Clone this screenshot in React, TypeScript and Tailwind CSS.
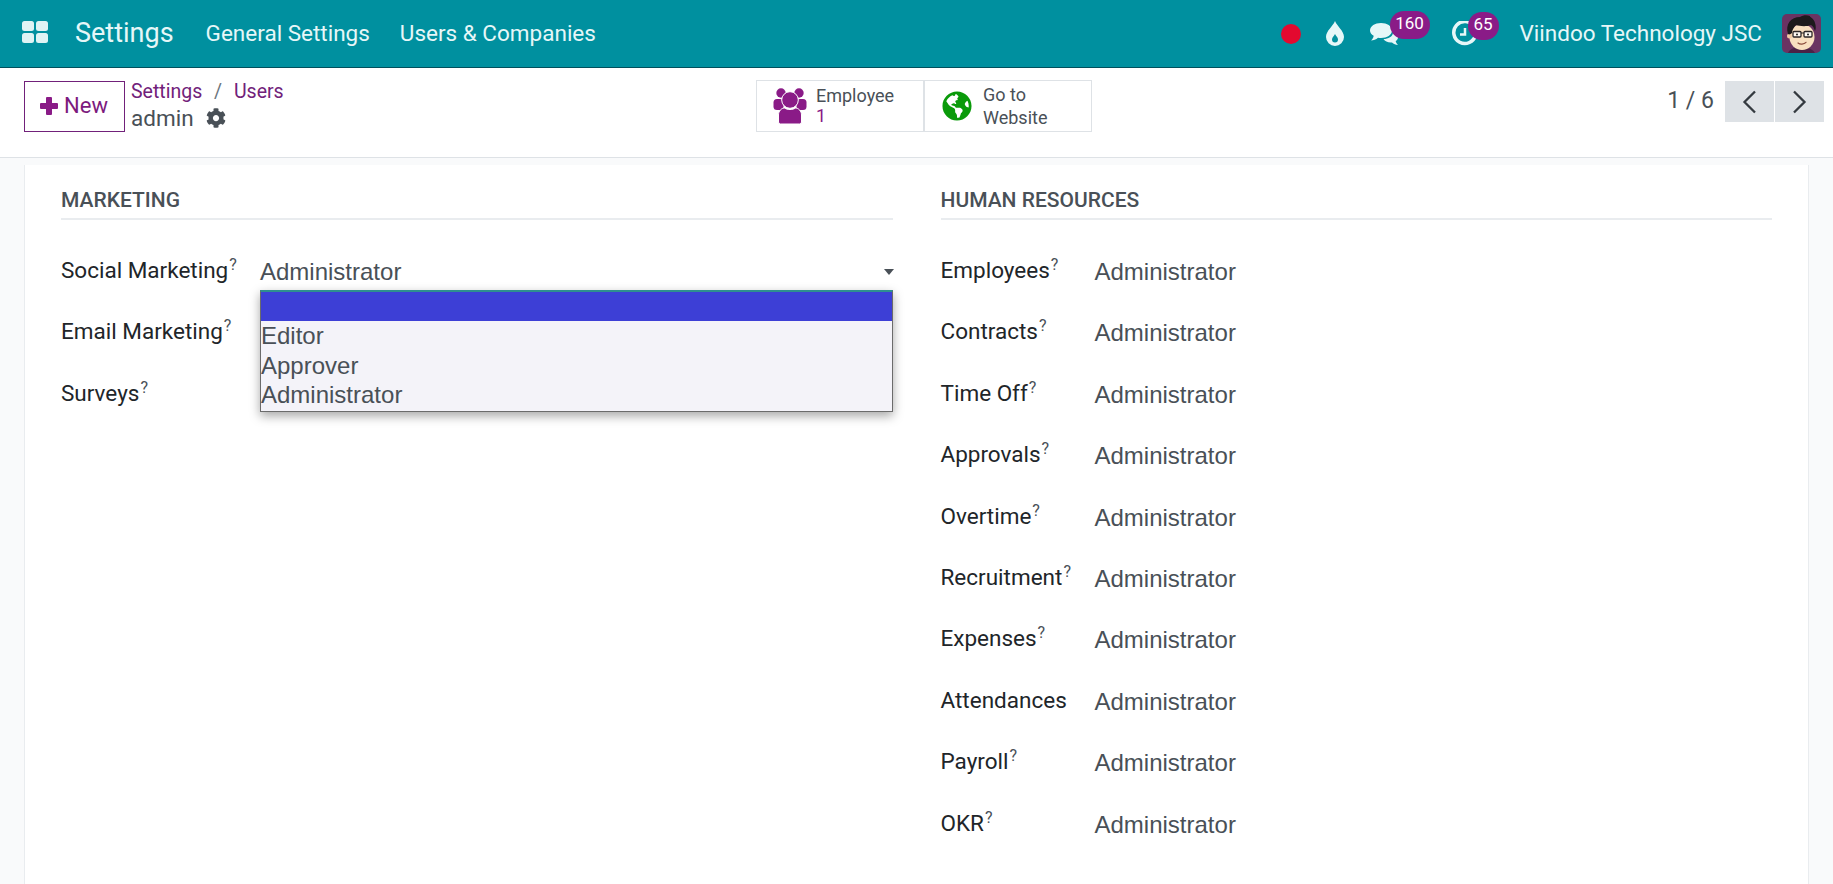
import React from "react";
import { FaCog, FaGlobeAmericas } from "react-icons/fa";

const leftRows = ["Social Marketing", "Email Marketing", "Surveys"];
const rightRows: [string, boolean][] = [
  ["Employees", true],
  ["Contracts", true],
  ["Time Off", true],
  ["Approvals", true],
  ["Overtime", true],
  ["Recruitment", true],
  ["Expenses", true],
  ["Attendances", false],
  ["Payroll", true],
  ["OKR", true],
];

function Label({ text, help = true }: { text: string; help?: boolean }) {
  return (
    <div className="text-[22.5px] leading-[30px] text-[#212529]">
      {text}
      {help && <sup className="text-[16px] text-[#495057] ml-px">?</sup>}
    </div>
  );
}

function Value({ className = "" }: { className?: string }) {
  return (
    <div className={`text-[24px] leading-[30px] text-[#495057] font-['Liberation_Sans',sans-serif] ${className}`}>
      Administrator
    </div>
  );
}

function Avatar() {
  return (
    <svg width="39" height="39" viewBox="0 0 39 39" className="rounded-[5px]">
      <rect width="39" height="39" fill="#6a3362" />
      <path d="M6 39c2-5 8-6 13-6s11 1 14 6z" fill="#4a2346" />
      <ellipse cx="20" cy="23" rx="12.500" ry="13" fill="#f8dfc0" />
      <circle cx="7.500" cy="22" r="2.500" fill="#f0c9a3" />
      <path d="M6 20C3 10 9 3 18 3c3-2 7-2 10-1-1 1 4 2 5 7 1 3 1 6 0 8-1-3-2-5-4-6-5 2-12 1-15 0-2 2-4 5-4 8-1 1-3 2-4 1z" fill="#1d1a1c" />
      <rect x="11" y="17.500" width="8" height="5.500" rx="1" fill="#fffc" stroke="#2a2526" strokeWidth="1.300" />
      <rect x="22" y="17.500" width="8" height="5.500" rx="1" fill="#fffc" stroke="#2a2526" strokeWidth="1.300" />
      <path d="M19 19h3" stroke="#2a2526" strokeWidth="1.200" />
      <circle cx="15" cy="20.500" r="1" fill="#222" />
      <circle cx="26" cy="20.500" r="1" fill="#222" />
      <path d="M16 29c2 1.500 6 1.500 8-.7" fill="none" stroke="#8a4b3c" strokeWidth="1.200" strokeLinecap="round" />
    </svg>
  );
}

function People() {
  return (
    <svg width="36" height="36" viewBox="0 0 33 36" fill="#8a1b87" className="shrink-0">
      <circle cx="7.500" cy="5" r="4.700" />
      <circle cx="25.500" cy="5" r="4.700" />
      <rect x="0" y="11" width="10" height="11" rx="3.500" />
      <rect x="23" y="11" width="10" height="11" rx="3.500" />
      <circle cx="16.500" cy="12" r="8.300" stroke="#fff" strokeWidth="1" />
      <path d="M5 34V27c0-4 3-7 6-7 1.500 1 3.500 1.500 5.500 1.500S20.500 21 22 20c3 0 6 3 6 7v7a2 2 0 0 1-2 2H7a2 2 0 0 1-2-2z" stroke="#fff" strokeWidth="1" />
    </svg>
  );
}

export default function App() {
  return (
    <div className="h-[884px] w-[1833px] overflow-hidden flex flex-col bg-[#f9fafb] font-['Roboto',sans-serif]">
      {/* Top bar */}
      <header className="h-[68px] shrink-0 flex items-center bg-[#00909f] border-b border-[#00505c] text-[#e6f7f8]">
        <svg width="26" height="22" viewBox="0 0 26 22" className="ml-[22px] -mt-[3px]" fill="#dff3f4">
          <rect x="0" y="0" width="12" height="10" rx="2.500" />
          <rect x="14" y="0" width="12" height="10" rx="2.500" />
          <rect x="0" y="12" width="12" height="10" rx="2.500" />
          <rect x="14" y="12" width="12" height="10" rx="2.500" />
        </svg>
        <div className="ml-[27px] text-[27px] leading-none">Settings</div>
        <div className="ml-[32px] text-[22.500px] leading-none">General Settings</div>
        <div className="ml-[30px] text-[22.500px] leading-none">Users &amp; Companies</div>
        <div className="ml-auto flex items-center h-full">
          <div className="w-5 h-5 rounded-full bg-[#e3092f]" />
          <svg width="18" height="25" viewBox="0 0 18 25" className="ml-[25px]">
            <path d="M9 0c2 5 9 10 9 16a9 9 0 0 1-18 0C0 10 7 5 9 0z" fill="#e6f7f8" />
            <path d="M9 13c1 2 3 3.500 3 5.500a3 3 0 0 1-6 0C6 16.500 8 15 9 13z" fill="#00909f" />
          </svg>
          <div className="relative ml-[26px] w-7 h-[24px]">
            <svg width="30" height="24" viewBox="0 0 30 24">
              <path d="M11 1c6 0 11 3 11 7.500S17 16 11 16c-1 0-2 0-3-.3C6 17.500 3.500 18.500 1 18.500c1.500-1.300 2.500-3 2.700-4.700C1.400 12.500 0 10.500 0 8.500 0 4 5 1 11 1z" fill="#e6f7f8" />
              <path d="M23 11c3 .5 5 2.500 5 4.500 0 1.500-1 2.800-2.300 3.600.2 1.300 1 2.800 2.300 3.900-2.200 0-4.500-1-6-2.500-4 .3-7-1-8.500-3.500 5 0 9-2.500 9.500-6z" fill="#e6f7f8" />
            </svg>
            <span className="absolute left-[20px] -top-[11px] w-[40px] h-7 rounded-full bg-[#8a1b87] text-white text-[17px] leading-[24px] text-center">160</span>
          </div>
          <div className="relative ml-[54px] w-[25px] h-[25px]">
            <svg width="25" height="25" viewBox="0 0 25 25" fill="none">
              <path d="M22 5.500A11 11 0 1 0 23.500 14" stroke="#e6f7f8" strokeWidth="3.500" />
              <path d="M13 7v6.500H8" stroke="#e6f7f8" strokeWidth="2.500" />
            </svg>
            <span className="absolute left-[16px] -top-[9px] w-[31px] h-7 rounded-full bg-[#8a1b87] text-white text-[17px] leading-[24px] text-center">65</span>
          </div>
          <div className="ml-[43px] text-[22.500px] leading-none">Viindoo Technology JSC</div>
          <div className="ml-[20px] mr-3 flex">
            <Avatar />
          </div>
        </div>
      </header>

      {/* Control panel */}
      <div className="h-[90px] shrink-0 bg-white border-b border-[#dee2e6] flex items-start pt-3 relative">
        <button className="ml-6 mt-px w-[101px] h-[51px] pb-[2px] border border-[#71217a] flex items-center justify-center gap-[6px] text-[#7c1a7e] text-[22px]">
          <svg width="18" height="18" viewBox="0 0 18 18" fill="#8a1b87" className="-ml-px">
            <rect x="6" y="0" width="6" height="18" rx="1" />
            <rect x="0" y="6" width="18" height="6" rx="1" />
          </svg>
          New
        </button>
        <div className="ml-[6px] -mt-[3px] w-[150px] shrink-0">
          <div className="text-[19.500px] leading-[30px] text-[#71217a] whitespace-nowrap">
            Settings <span className="text-[#6c757d] mx-[7px]">/</span> Users
          </div>
          <div className="flex items-center text-[22.500px] leading-[28px] text-[#495057] -mt-[3px]">
            admin
            <FaCog className="ml-3 w-5 h-5 text-[#495057]" />
          </div>
        </div>
        <div className="ml-[475px] flex h-[52px] w-[336px] border border-[#dee2e6] divide-x-2 divide-[#dee2e6]">
          <div className="w-[169px] flex items-center pl-[15px]">
            <People />
            <div className="ml-[8px] text-[18px] leading-[20px] text-[#495057]">
              Employee
              <div className="text-[#8a1b87]">1</div>
            </div>
          </div>
          <div className="w-[167px] flex items-center pl-[17px]">
            <FaGlobeAmericas className="w-[30px] h-[30px] text-[#0a9a0a]" />
            <div className="ml-[11px] text-[18px] leading-[23px] text-[#495057]">
              Go to
              <br />
              Website
            </div>
          </div>
        </div>
        <div className="ml-auto flex items-center mr-[9px] mt-px">
          <span className="text-[23px] text-[#495057] mr-[11px] -mt-px">1 / 6</span>
          <div className="w-[49px] h-[41px] bg-[#dee2e6] flex items-center justify-center">
            <svg width="15" height="24" viewBox="0 0 15 24" fill="none" stroke="#343a40" strokeWidth="2.300">
              <path d="M13 1.500 2.500 12 13 22.500" />
            </svg>
          </div>
          <div className="ml-px w-[49px] h-[41px] bg-[#dee2e6] flex items-center justify-center">
            <svg width="15" height="24" viewBox="0 0 15 24" fill="none" stroke="#343a40" strokeWidth="2.300">
              <path d="M2 1.500 12.500 12 2 22.500" />
            </svg>
          </div>
        </div>
      </div>

      {/* Content */}
      <main className="flex-1 min-h-0 px-6 pt-[7px] overflow-hidden">
        <div className="h-full bg-white border-x border-[#e9ecef] grid grid-cols-2 px-[36px] gap-x-12 pt-[17px]">
          <section>
            <h2 className="text-[21px] leading-[36px] font-medium text-[#495057] border-b-2 border-[#e9ecef] uppercase h-[38px]">Marketing</h2>
            <div className="mt-[35px] flex flex-col gap-[29.400px] relative">
              {leftRows.map((r, i) => (
                <div key={r} className="grid grid-cols-[199px_1fr] items-start min-h-[32px]">
                  <Label text={r} />
                  {i === 0 && (
                    <div className="flex items-center justify-between pt-[2px]">
                      <Value />
                      <span className="w-0 h-0 border-x-[5px] border-x-transparent border-t-[6px] border-t-[#495057] -mr-[1px]" />
                    </div>
                  )}
                </div>
              ))}
              <div className="absolute left-[199px] right-0 top-[35px] h-[122px] border border-[#6b6b6b] border-t-[#2f8f8f] border-t-2 bg-[#f4f3f9] shadow-[0_4px_10px_rgba(0,0,0,0.35)] text-[24px] leading-[30px] text-[#495057] font-['Liberation_Sans',sans-serif] overflow-hidden">
                <div className="h-[29px] bg-[#3d3fd6]" />
                <div className="h-[29.500px]">Editor</div>
                <div className="h-[29.500px]">Approver</div>
                <div className="h-[30px]">Administrator</div>
              </div>
            </div>
          </section>
          <section>
            <h2 className="text-[21px] leading-[36px] font-medium text-[#495057] border-b-2 border-[#e9ecef] uppercase h-[38px]">Human Resources</h2>
            <div className="mt-[35px] flex flex-col gap-[29.400px]">
              {rightRows.map(([r, help]) => (
                <div key={r} className="grid grid-cols-[154px_1fr] items-start min-h-[32px]">
                  <Label text={r} help={help} />
                  <Value className="pt-[2px]" />
                </div>
              ))}
            </div>
          </section>
        </div>
      </main>
    </div>
  );
}
